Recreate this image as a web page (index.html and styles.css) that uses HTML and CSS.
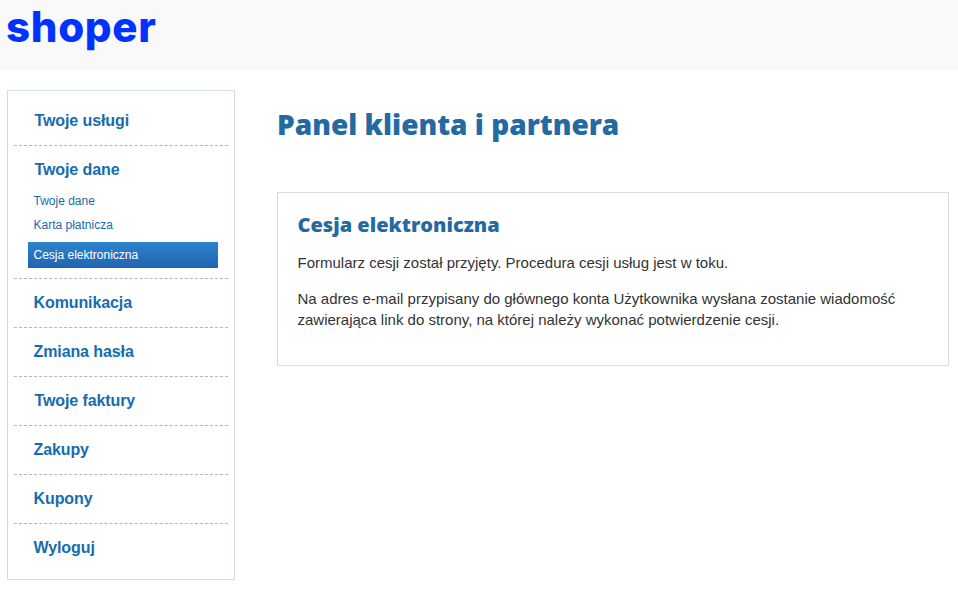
FILE: index.html
```html
<!DOCTYPE html>
<html lang="pl">
<head>
    <meta charset="UTF-8">
    <meta name="viewport" content="width=device-width, initial-scale=1.0">
    <title>Panel klienta i partnera</title>
    <link rel="stylesheet" href="styles.css">
</head>
<body>

    <header class="top">
        <a class="logo" href="#">shoper</a>
    </header>

    <div class="page">
        <nav class="sidebar">
            <ul class="menu">
                <li class="menu-item indent"><a href="#">Twoje usługi</a></li>
                <li class="menu-item indent has-sub">
                    <a href="#">Twoje dane</a>
                    <ul class="submenu">
                        <li><a href="#">Twoje dane</a></li>
                        <li><a href="#">Karta płatnicza</a></li>
                        <li class="active"><a href="#">Cesja elektroniczna</a></li>
                    </ul>
                </li>
                <li class="menu-item"><a href="#">Komunikacja</a></li>
                <li class="menu-item"><a href="#">Zmiana hasła</a></li>
                <li class="menu-item indent"><a href="#">Twoje faktury</a></li>
                <li class="menu-item"><a href="#">Zakupy</a></li>
                <li class="menu-item"><a href="#">Kupony</a></li>
                <li class="menu-item"><a href="#">Wyloguj</a></li>
            </ul>
        </nav>

        <main class="content">
            <h1>Panel klienta i partnera</h1>
            <section class="box">
                <h2>Cesja elektroniczna</h2>
                <p>Formularz cesji został przyjęty. Procedura cesji usług jest w toku.</p>
                <p>Na adres e-mail przypisany do głównego konta Użytkownika wysłana zostanie wiadomość zawierająca link do strony, na której należy wykonać potwierdzenie cesji.</p>
            </section>
        </main>
    </div>

</body>
</html>
```

FILE: styles.css
```css
body {
    margin: 0;
    font-family: "Liberation Sans", Arial, sans-serif;
    color: #333333;
    background: #ffffff;
}

a {
    text-decoration: none;
}

ul {
    list-style: none;
    margin: 0;
    padding: 0;
}

.top {
    height: 70px;
    background: #f9f9f9;
    box-sizing: border-box;
    padding-left: 6px;
}

.logo {
    display: block;
    font-family: Inter, sans-serif;
    font-weight: 800;
    font-size: 42px;
    line-height: 53px;
    letter-spacing: 0.7px;
    color: #0033ff;
}

.page {
    display: flex;
    align-items: flex-start;
    padding: 20px 9px 0 7px;
}

.sidebar {
    width: 228px;
    height: 490px;
    box-sizing: border-box;
    flex-shrink: 0;
    border: 1px solid #d0dfdf;
    padding: 6px 6px 0;
}

.menu-item {
    height: 48px;
    border-bottom: 1px dashed #b5b5b5;
    padding-left: 19.5px;
}

.menu-item:last-child {
    border-bottom: none;
}

.menu-item.indent {
    padding-left: 20.5px;
}

.menu-item.has-sub {
    height: 132px;
    padding-left: 14px;
}

.menu-item > a {
    display: block;
    font-size: 16px;
    font-weight: bold;
    line-height: 48px;
    letter-spacing: -0.1px;
    color: #156cb0;
}

.has-sub > a {
    padding-left: 6.5px;
}

.submenu {
    margin-top: -5px;
}

.submenu li {
    width: 190px;
    height: 24px;
    box-sizing: border-box;
    padding-left: 5.5px;
    font-size: 12px;
    line-height: 24px;
}

.submenu a {
    color: #156cb0;
}

.submenu .active {
    height: 26px;
    margin-top: 5px;
    line-height: 26px;
    background: linear-gradient(to bottom, #2d84cd, #2163b0);
}

.submenu .active a {
    color: #ffffff;
}

.content {
    flex: 1;
    margin-left: 42px;
}

h1 {
    margin: 0 0 51px;
    padding-top: 18px;
    font-family: "Open Sans", sans-serif;
    font-size: 28px;
    font-weight: 800;
    line-height: 33px;
    color: #236aa3;
}

.box {
    height: 174px;
    box-sizing: border-box;
    border: 1px solid #d9dcdd;
    padding: 18px 20px 0 19.5px;
}

h2 {
    margin: 0 0 14px;
    font-family: "Open Sans", sans-serif;
    font-size: 20px;
    font-weight: 800;
    line-height: 27px;
    color: #236aa3;
}

.box p {
    margin: 0 0 15px;
    font-size: 15px;
    line-height: 21px;
}
```
